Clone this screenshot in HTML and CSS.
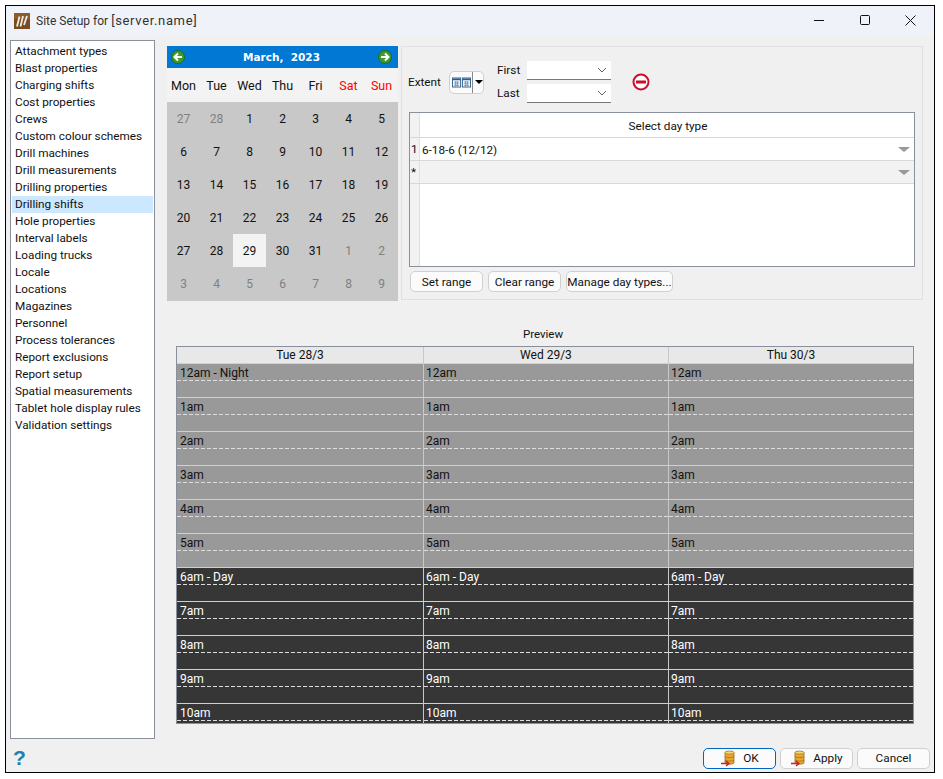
FILE: index.html
```html
<!DOCTYPE html>
<html lang="en">
<head>
<meta charset="utf-8">
<title>Site Setup</title>
<link rel="stylesheet" href="styles.css">
</head>
<body>
<div class="window">
  <header class="titlebar">
    <svg class="app-icon" width="16" height="16" viewBox="0 0 16 16"><rect width="16" height="16" fill="#7a4a22"/><rect width="16" height="6" fill="#8d5a2e"/><path d="M5.500 3.500 3 13.500M9 3 6.500 13.500M13 3 10 12" stroke="#f1ece2" stroke-width="1.800" fill="none"/></svg>
    <span class="title">Site Setup for <span class="title-server">[server.name]</span></span>
    <div class="win-controls">
      <svg width="11" height="11" viewBox="0 0 11 11"><path d="M0 5.500h10" stroke="#111" fill="none"/></svg>
      <svg width="11" height="11" viewBox="0 0 11 11"><rect x=".5" y=".5" width="9" height="9" rx="1" stroke="#111" fill="none"/></svg>
      <svg width="11" height="11" viewBox="0 0 11 11"><path d="M.5.500l10 10M10.500.500l-10 10" stroke="#111" fill="none"/></svg>
    </div>
  </header>

  <div class="content">
    <ul class="nav-list">
      <li>Attachment types</li><li>Blast properties</li><li>Charging shifts</li><li>Cost properties</li><li>Crews</li><li>Custom colour schemes</li><li>Drill machines</li><li>Drill measurements</li><li>Drilling properties</li><li class="selected">Drilling shifts</li><li>Hole properties</li><li>Interval labels</li><li>Loading trucks</li><li>Locale</li><li>Locations</li><li>Magazines</li><li>Personnel</li><li>Process tolerances</li><li>Report exclusions</li><li>Report setup</li><li>Spatial measurements</li><li>Tablet hole display rules</li><li>Validation settings</li>
    </ul>

    <main class="main">
      <div class="top-row">
        <section class="calendar">
          <div class="cal-head">
            <svg width="16" height="16" viewBox="0 0 16 16"><circle cx="8" cy="8" r="6.500" fill="#3d9a2c" stroke="#1f6e1a"/><path d="M12 8H5M8 4.500 4.500 8 8 11.500" stroke="#fff" stroke-width="2" fill="none"/></svg>
            <span class="cal-month">March, &nbsp;2023</span>
            <svg width="16" height="16" viewBox="0 0 16 16"><circle cx="8" cy="8" r="6.500" fill="#3d9a2c" stroke="#1f6e1a"/><path d="M4 8h7M8 4.500 11.500 8 8 11.500" stroke="#fff" stroke-width="2" fill="none"/></svg>
          </div>
          <div class="cal-days">
            <span>Mon</span><span>Tue</span><span>Wed</span><span>Thu</span><span>Fri</span><span class="weekend">Sat</span><span class="weekend">Sun</span>
          </div>
          <div class="cal-grid">
            <span class="muted">27</span><span class="muted">28</span><span>1</span><span>2</span><span>3</span><span>4</span><span>5</span>
            <span>6</span><span>7</span><span>8</span><span>9</span><span>10</span><span>11</span><span>12</span>
            <span>13</span><span>14</span><span>15</span><span>16</span><span>17</span><span>18</span><span>19</span>
            <span>20</span><span>21</span><span>22</span><span>23</span><span>24</span><span>25</span><span>26</span>
            <span>27</span><span>28</span><span class="today">29</span><span>30</span><span>31</span><span class="muted">1</span><span class="muted">2</span>
            <span class="muted">3</span><span class="muted">4</span><span class="muted">5</span><span class="muted">6</span><span class="muted">7</span><span class="muted">8</span><span class="muted">9</span>
          </div>
        </section>

        <section class="panel">
          <div class="extent-row">
            <span class="extent-label">Extent</span>
            <button class="cal-btn">
              <svg width="21" height="11" viewBox="0 0 21 11"><g fill="#fff" stroke="#2c5a8c"><rect x=".5" y=".5" width="9" height="10"/><rect x="11.500" y=".5" width="9" height="10"/></g><path d="M1 1h8v2H1zM12 1h8v2h-8z" fill="#2c5a8c"/><path d="M2 5h6M2 7h6M2 9h6M13 5h6M13 7h6M13 9h6M4 4v6M6 4v6M15 4v6M17 4v6" stroke="#5f86ad" stroke-width=".8" fill="none"/></svg>
              <span class="cal-btn-sep"></span>
              <span class="arrow-down"></span>
            </button>
            <div class="dates">
              <div class="date-row"><label>First</label><span class="combo"><svg width="10" height="6" viewBox="0 0 10 6"><path d="M1 1l4 4 4-4" stroke="#666" fill="none"/></svg></span></div>
              <div class="date-row"><label>Last</label><span class="combo"><svg width="10" height="6" viewBox="0 0 10 6"><path d="M1 1l4 4 4-4" stroke="#666" fill="none"/></svg></span></div>
            </div>
            <svg class="remove-icon" width="18" height="18" viewBox="0 0 18 18"><circle cx="9" cy="9" r="7.500" fill="#fff" stroke="#c8102e" stroke-width="2"/><rect x="4" y="7.500" width="10" height="3" fill="#c8102e"/></svg>
          </div>

          <div class="day-grid">
            <div class="dg-row dg-header"><span class="dg-idx"></span><span class="dg-cell center">Select day type</span></div>
            <div class="dg-row"><span class="dg-idx">1</span><span class="dg-cell">6-18-6 (12/12)</span><span class="tri"></span></div>
            <div class="dg-row dg-new"><span class="dg-idx">*</span><span class="dg-cell"></span><span class="tri"></span></div>
            <div class="dg-fill"><span class="dg-idx"></span></div>
          </div>

          <div class="btn-row">
            <button class="btn w73">Set range</button>
            <button class="btn w73">Clear range</button>
            <button class="btn w107">Manage day types...</button>
          </div>
        </section>
      </div>

      <div class="preview-label">Preview</div>
      <section class="schedule">
        <div class="sch-head"><span>Tue 28/3</span><span>Wed 29/3</span><span>Thu 30/3</span></div>
        <div class="sch-body">
          <div class="sch-row night"><span>12am - Night</span><span>12am</span><span>12am</span></div>
          <div class="sch-row night"><span>1am</span><span>1am</span><span>1am</span></div>
          <div class="sch-row night"><span>2am</span><span>2am</span><span>2am</span></div>
          <div class="sch-row night"><span>3am</span><span>3am</span><span>3am</span></div>
          <div class="sch-row night"><span>4am</span><span>4am</span><span>4am</span></div>
          <div class="sch-row night"><span>5am</span><span>5am</span><span>5am</span></div>
          <div class="sch-row day"><span>6am - Day</span><span>6am - Day</span><span>6am - Day</span></div>
          <div class="sch-row day"><span>7am</span><span>7am</span><span>7am</span></div>
          <div class="sch-row day"><span>8am</span><span>8am</span><span>8am</span></div>
          <div class="sch-row day"><span>9am</span><span>9am</span><span>9am</span></div>
          <div class="sch-row day"><span>10am</span><span>10am</span><span>10am</span></div>
        </div>
      </section>
    </main>
  </div>

  <footer class="footer">
    <span class="help">?</span>
    <div class="footer-btns">
      <button class="btn fbtn primary">
        <svg width="18" height="18" viewBox="0 0 18 18"><path d="M5 3.500C5 2 14 2 14 3.500V14c0 1.500-9 1.500-9 0z" fill="#e8a62c" stroke="#8a5a1a" stroke-width=".7"/><ellipse cx="9.500" cy="3.500" rx="4.500" ry="1.500" fill="#f6d67a" stroke="#8a5a1a" stroke-width=".5"/><path d="M5 7.500c0 1.400 9 1.400 9 0M5 11c0 1.400 9 1.400 9 0" stroke="#9a6a1a" stroke-width=".7" fill="none"/><path d="M1 14.500h7M6 12l3 2.500L6 17" stroke="#c8202e" stroke-width="1.400" fill="none"/></svg>
        OK
      </button>
      <button class="btn fbtn">
        <svg width="18" height="18" viewBox="0 0 18 18"><path d="M5 3.500C5 2 14 2 14 3.500V14c0 1.500-9 1.500-9 0z" fill="#e8a62c" stroke="#8a5a1a" stroke-width=".7"/><ellipse cx="9.500" cy="3.500" rx="4.500" ry="1.500" fill="#f6d67a" stroke="#8a5a1a" stroke-width=".5"/><path d="M5 7.500c0 1.400 9 1.400 9 0M5 11c0 1.400 9 1.400 9 0" stroke="#9a6a1a" stroke-width=".7" fill="none"/><path d="M1 14.500h7M6 12l3 2.500L6 17" stroke="#c8202e" stroke-width="1.400" fill="none"/></svg>
        Apply
      </button>
      <button class="btn fbtn">Cancel</button>
    </div>
  </footer>
</div>
</body>
</html>
```
FILE: styles.css
```css
* { box-sizing: border-box; }
html, body { margin: 0; height: 100%; background: #fff; }
body { padding: 5px 0 0 5px; font: 11.750px/16px Roboto, "Liberation Sans", sans-serif; color: #111; overflow: hidden; }
ul { list-style: none; margin: 0; padding: 0; }
button { font: inherit; color: inherit; }

.window { width: 930px; height: 768px; border: 1px solid #000; background: #f0f0f0; display: flex; flex-direction: column; }

.titlebar { height: 30px; flex: none; background: #eff2f9; display: flex; align-items: center; padding-left: 8px; font-size: 12px; }
.app-icon { flex: none; margin-right: 6px; }
.title { color: #333; }
.title-server { font-size: 13px; letter-spacing: .65px; }
.win-controls { margin-left: auto; display: flex; gap: 34.500px; padding-bottom: 1px; width: 120px; }

.content { flex: none; height: 703px; display: flex; padding: 4px 0 0 4px; }

.nav-list { width: 145px; height: 699px; flex: none; background: #fff; border: 1px solid #8a8f9e; padding: 2px 1px; }
.nav-list li { height: 17px; line-height: 16px; padding-left: 3px; white-space: nowrap; }
.nav-list li.selected { background: #cce8ff; }

.main { flex: none; width: 768px; margin-left: 12px; padding-top: 6px; }
.top-row { display: flex; gap: 3px; height: 255px; }

.calendar { width: 231px; flex: none; background: #f3f3f3; }
.cal-head { height: 22px; background: #0078d4; color: #fff; display: flex; align-items: center; justify-content: space-between; padding: 0 5px 0 3px; }
.cal-month { font: bold 10.500px "DejaVu Sans", sans-serif; }
.cal-days { height: 34px; padding-top: 2px; display: grid; grid-template-columns: repeat(7, 33px); align-items: center; text-align: center; font-size: 12.500px; }
.weekend { color: #f00; }
.cal-grid { display: grid; grid-template-columns: repeat(7, 33px); grid-auto-rows: 33px; height: 199px; background: #c8c8c8; font-size: 12px; }
.cal-grid span { display: flex; align-items: center; justify-content: center; padding-top: 1px; }
.cal-grid .muted { color: #808080; }
.cal-grid .today { background: #f3f3f3; }

.panel { width: 522px; flex: none; height: 254px; border: 1px solid #e0e0e0; padding: 0 7px; display: flex; flex-direction: column; }
.extent-row { height: 65px; flex: none; display: flex; align-items: center; }
.extent-label { width: 41px; padding-top: 4px; margin-left: -1px; }
.cal-btn { width: 35px; height: 23px; margin-top: 5px; padding: 0 0 0 2px; background: #fbfbfb; border: 1px solid #d0d0d0; border-radius: 5px; display: flex; align-items: center; }
.cal-btn-sep { width: 1px; height: 21px; background: #888; flex: none; margin: 0 2px 0 1px; }
.arrow-down { width: 0; height: 0; flex: none; border: 4px solid transparent; border-top: 4px solid #000; border-bottom: 0; }
.dates { margin-left: 13px; display: flex; flex-direction: column; gap: 4px; padding-top: 4px; }
.date-row { display: flex; align-items: center; height: 19px; }
.date-row label { width: 30px; }
.combo { width: 84px; height: 19px; background: #fff; border-bottom: 1px solid #777; display: flex; align-items: center; justify-content: flex-end; padding-right: 4px; }
.remove-icon { margin: 4px 0 0 21px; }

.day-grid { width: 506px; height: 155px; flex: none; border: 1px solid #8a8f9e; background: #fff; display: flex; flex-direction: column; }
.dg-row { display: flex; align-items: center; flex: none; height: 23px; border-bottom: 1px solid #d8d8d8; }
.dg-header { height: 25px; }
.dg-header .dg-cell { padding-top: 2px; }
.dg-new { background: #f2f2f2; }
.dg-idx { width: 10px; align-self: stretch; flex: none; background: #f2f2f2; border-right: 1px solid #e0e0e0; display: flex; align-items: center; padding-left: 1px; }
.dg-cell { flex: 1; padding-left: 2px; padding-top: 1px; }
.center { text-align: center; }
.tri { width: 0; height: 0; margin-right: 4px; border: 5px solid transparent; border-top: 5px solid #999; border-bottom: 0; border-left-width: 6px; border-right-width: 6px; }
.dg-fill { flex: 1; display: flex; }

.btn-row { display: flex; gap: 5px; margin-top: 4px; padding-left: 1px; }
.btn { height: 21px; padding: 0; background: #fbfbfb; border: 1px solid #d0d0d0; border-radius: 5px; white-space: nowrap; }
.w73 { width: 73px; }
.w107 { width: 107px; }

.preview-label { text-align: center; margin-top: 25px; height: 20px; padding-right: 2px; line-height: 16px; width: 754px; font-size: 11.500px; }
.schedule { width: 738px; height: 378px; margin-left: 9px; border: 1px solid #8a8f9e; overflow: hidden; }
.sch-head { display: grid; grid-template-columns: 246px 245px 1fr; height: 17px; background: #e8e8e8; text-align: center; line-height: 17px; border-bottom: 1px solid #d0d0d0; font-size: 12px; }
.sch-head span { border-left: 1px solid #c8c8c8; }
.sch-head span:first-child { border-left: 0; }
.sch-row { display: grid; grid-template-columns: 246px 245px 1fr; height: 34px; border-bottom: 1px solid #d0d0d0; font-size: 12px; }
.sch-row span { height: 33px; padding: 1px 0 0 2px; border-left: 1px solid #c8c8c8; position: relative; line-height: 16px; }
.sch-row span:first-child { border-left: 0; padding-left: 3px; }
.sch-row span::after { content: ""; position: absolute; left: 0; right: 0; top: 16px; height: 1px; background: repeating-linear-gradient(90deg, #ddd 0 4px, transparent 4px 6px); }
.night { background: #999; color: #111; }
.day { background: #363636; color: #fff; }

.footer { flex: 1; display: flex; align-items: center; justify-content: space-between; padding: 0 4px 0 7px; }
.help { font: bold 21px/20px "Liberation Sans", sans-serif; color: #1f7fb4; padding-top: 5px; }
.footer-btns { display: flex; gap: 4px; padding-top: 5px; }
.fbtn { width: 73px; height: 21px; display: flex; align-items: center; justify-content: center; gap: 5px; }
.primary { border: 1px solid #0067c0; }
```
